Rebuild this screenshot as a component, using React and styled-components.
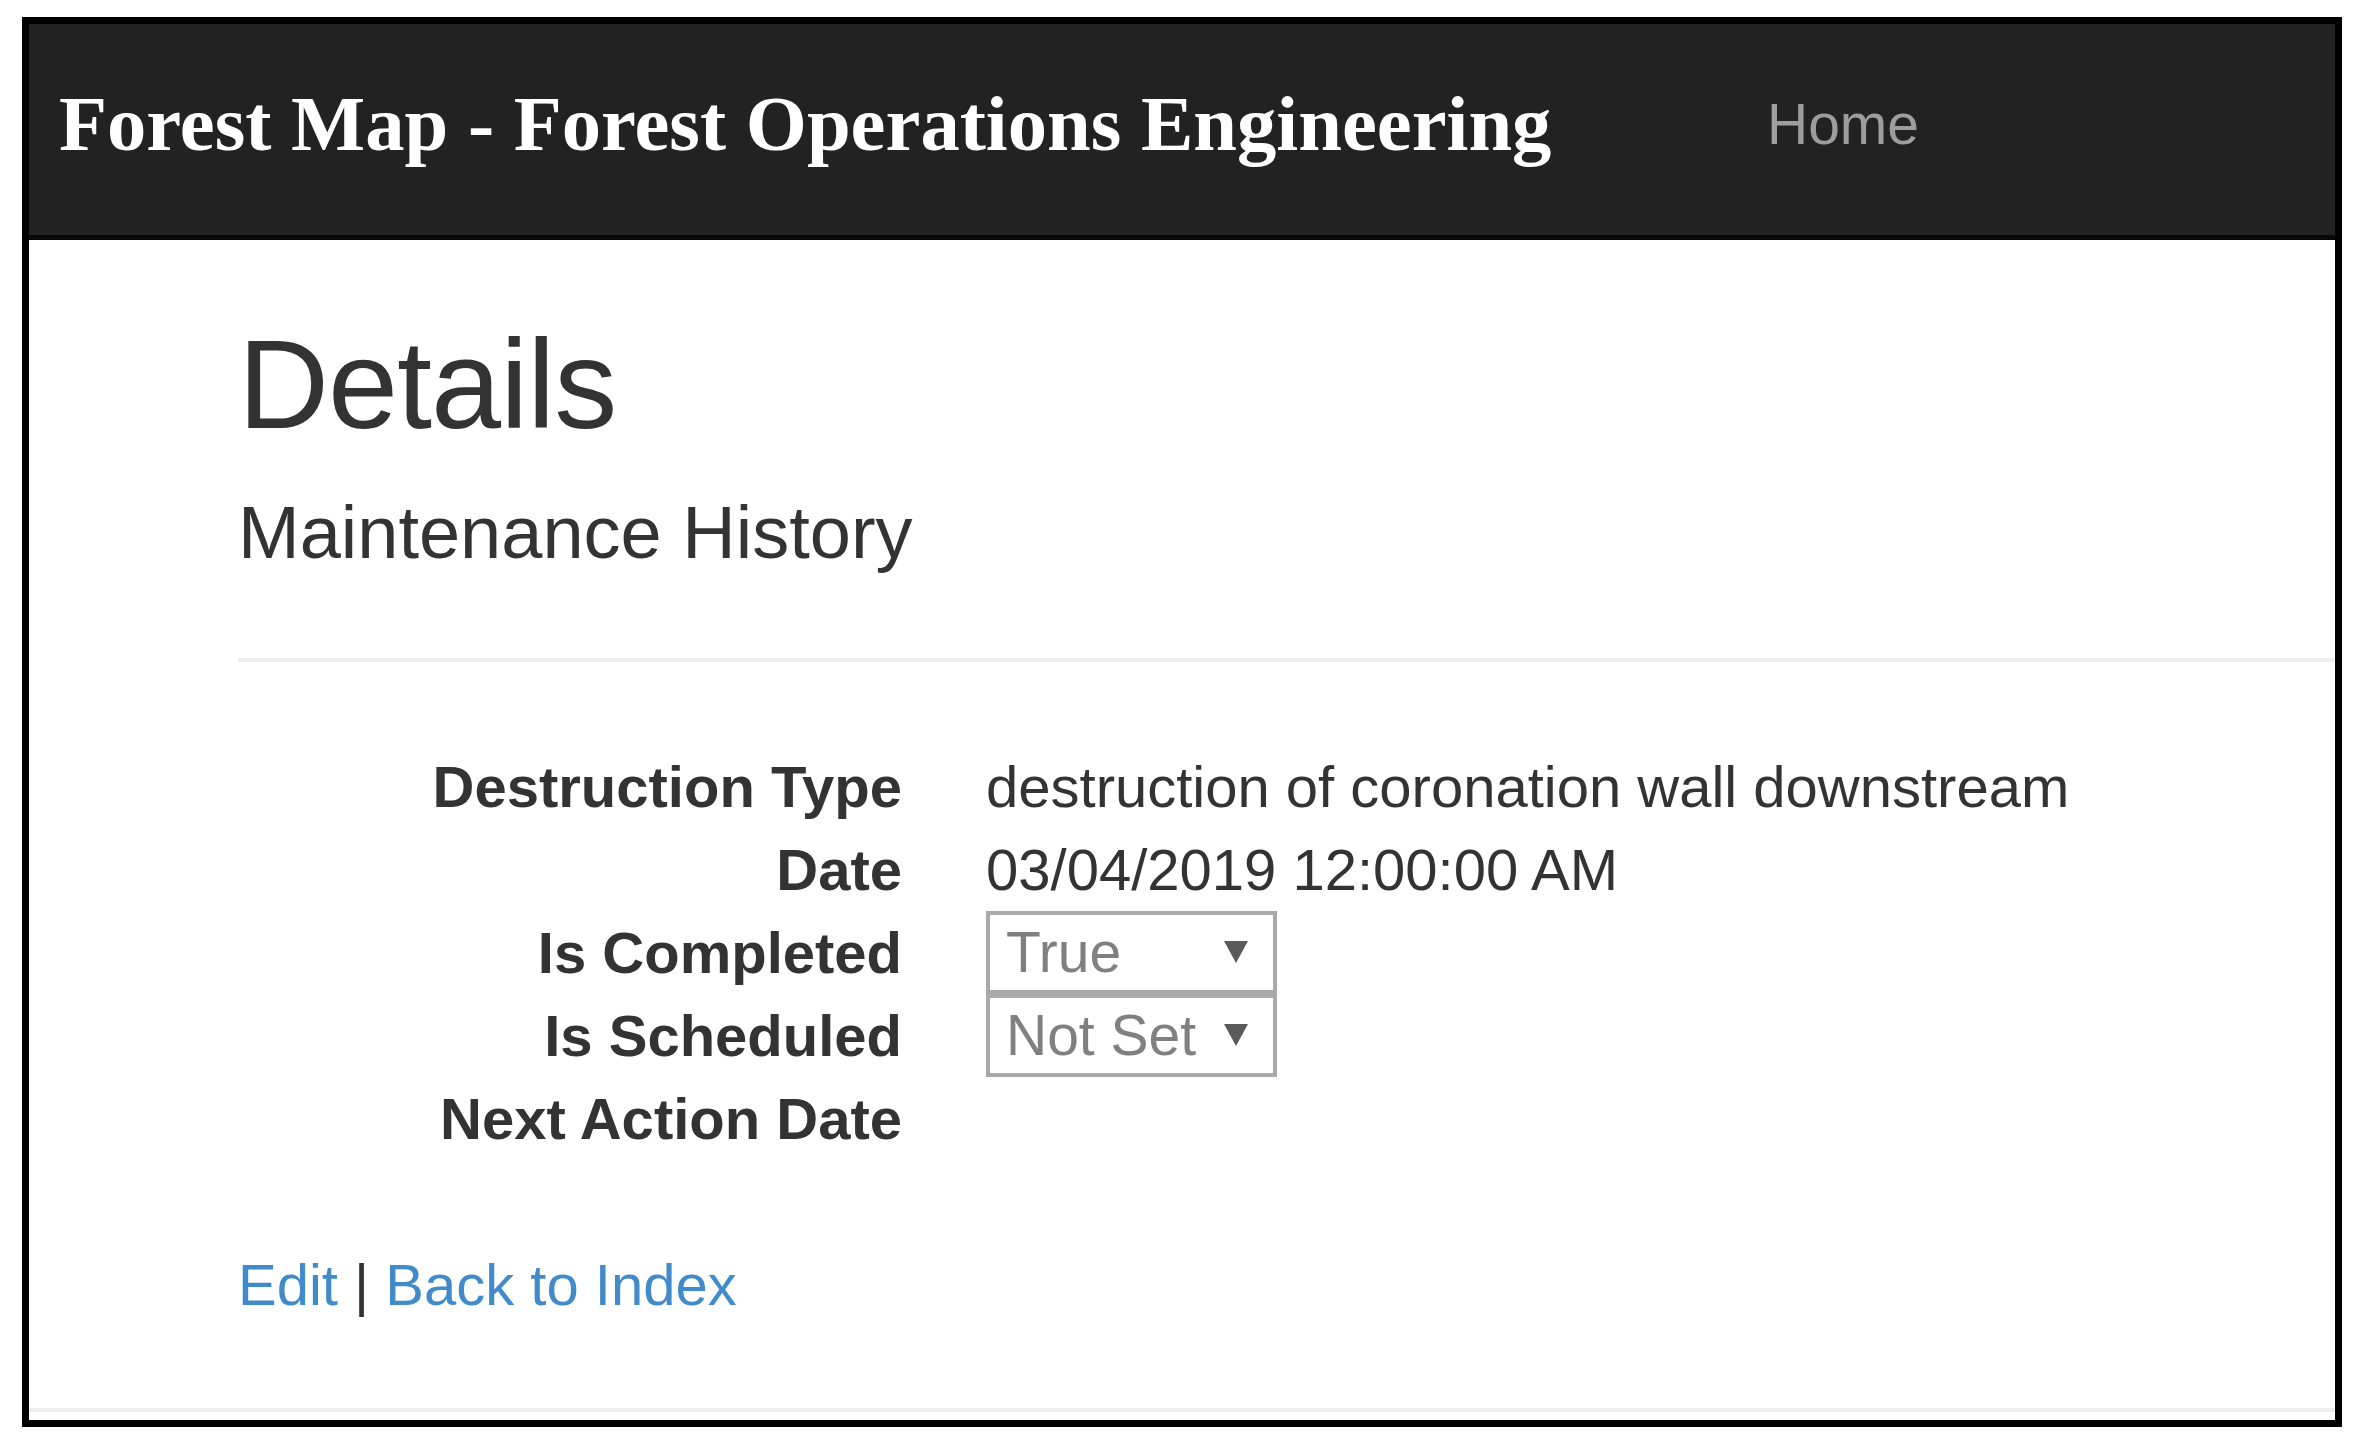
import React from 'react';
import styled, { createGlobalStyle } from 'styled-components';

const GlobalStyle = createGlobalStyle`
  html, body {
    margin: 0;
    padding: 0;
    background: #fff;
  }
  body {
    font-family: "Liberation Sans", Arial, sans-serif;
    color: #333;
  }
`;

const details = [
    { label: 'Destruction Type', value: 'destruction of coronation wall downstream' },
    { label: 'Date', value: '03/04/2019 12:00:00 AM' },
    { label: 'Is Completed', select: 'True' },
    { label: 'Is Scheduled', select: 'Not Set' },
    { label: 'Next Action Date', value: '' },
];

const App = () => {
    return (
        <>
            <GlobalStyle />
            <Frame>
                <Navbar>
                    <Brand>Forest Map - Forest Operations Engineering</Brand>
                    <NavLink href="#">Home</NavLink>
                </Navbar>
                <Main>
                    <Title>Details</Title>
                    <Subtitle>Maintenance History</Subtitle>
                    <Rule />
                    <DetailList>
                        {details.map(item => (
                            <React.Fragment key={item.label}>
                                <Term>{item.label}</Term>
                                <Desc>
                                    {item.select ? (
                                        <FakeSelect>
                                            <span>{item.select}</span>
                                            <svg width="24" height="22" viewBox="0 0 24 22">
                                                <polygon points="0,0 24,0 12,22" fill="#5a5a5a" />
                                            </svg>
                                        </FakeSelect>
                                    ) : item.value}
                                </Desc>
                            </React.Fragment>
                        ))}
                    </DetailList>
                    <Actions>
                        <Link href="#">Edit</Link> | <Link href="#">Back to Index</Link>
                    </Actions>
                </Main>
                <FooterRule />
            </Frame>
        </>
    );
};

const Frame = styled.div`
    margin: 17px 0 0 22px;
    width: 2320px;
    height: 1410px;
    box-sizing: border-box;
    border: 7px solid #000;
    background: #fff;
    overflow: hidden;
    display: flex;
    flex-direction: column;
`;

const Navbar = styled.nav`
    flex: none;
    height: 216px;
    box-sizing: border-box;
    background: #222;
    border-bottom: 5px solid #080808;
    display: flex;
    align-items: center;
    padding: 0 0 11px 30px;
`;

const Brand = styled.div`
    flex: 0 0 1708px;
    font-family: "Liberation Serif", "Times New Roman", serif;
    font-weight: bold;
    font-size: 78.6px;
    line-height: 1;
    color: #fff;
    white-space: nowrap;
`;

const NavLink = styled.a`
    font-size: 57px;
    line-height: 1;
    color: #9d9d9d;
    text-decoration: none;
`;

const Main = styled.main`
    flex: none;
    padding-left: 209px;
    display: flex;
    flex-direction: column;
`;

const Title = styled.h2`
    margin: 76px 0 0;
    font-size: 126px;
    font-weight: 400;
    line-height: 1.1;
    color: #333;
    letter-spacing: -1px;
`;

const Subtitle = styled.h4`
    margin: 37px 0 0;
    font-size: 74px;
    font-weight: 400;
    line-height: 1.1;
    color: #333;
`;

const Rule = styled.hr`
    margin: 85px 0 0;
    border: 0;
    border-top: 4px solid #eee;
`;

const DetailList = styled.dl`
    margin: 83px 0 0;
    display: grid;
    grid-template-columns: 664px 1fr;
    column-gap: 84px;
    font-size: 58px;
    line-height: 83px;
`;

const Term = styled.dt`
    font-weight: bold;
    text-align: right;
    white-space: nowrap;
    color: #333;
`;

const Desc = styled.dd`
    margin: 0;
    min-height: 83px;
    white-space: nowrap;
    color: #333;
`;

const FakeSelect = styled.div`
    width: 291px;
    height: 83px;
    box-sizing: border-box;
    border: 4px solid #a9a9a9;
    display: flex;
    align-items: center;
    justify-content: space-between;
    padding: 0 25px 0 16px;
    color: #808080;
    font-size: 57px;
    line-height: 1;
`;

const Actions = styled.p`
    margin: 83px 0 0;
    font-size: 58px;
    line-height: 83px;
    color: #333;
`;

const Link = styled.a`
    color: #428bca;
    text-decoration: none;
`;

const FooterRule = styled.div`
    flex: none;
    margin-top: 82px;
    border-top: 4px solid #eee;
`;

export default App;
